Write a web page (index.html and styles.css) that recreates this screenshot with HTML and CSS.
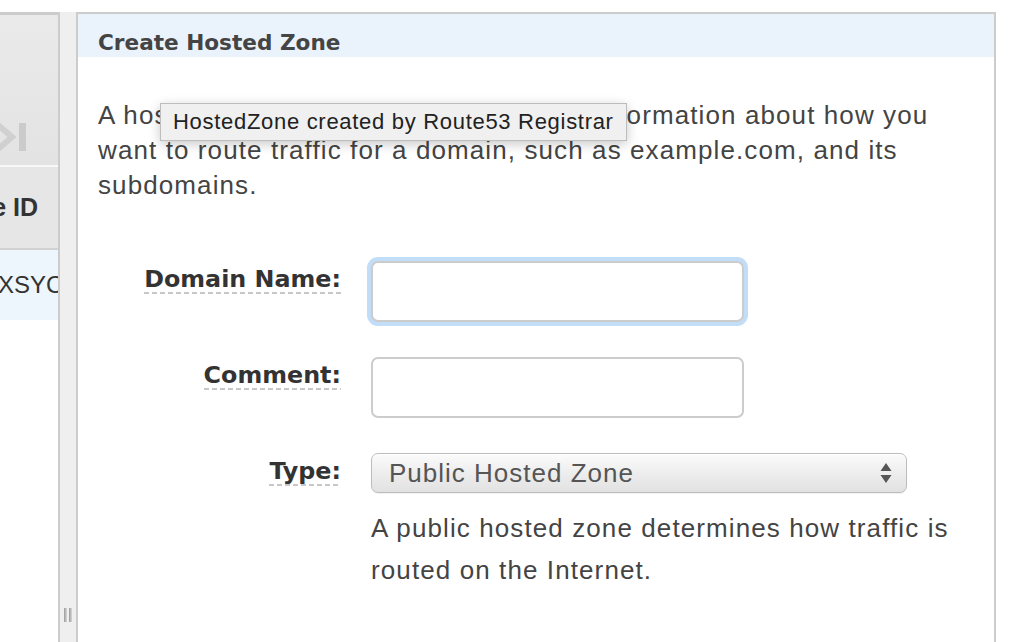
FILE: index.html
```html
<!DOCTYPE html>
<html>
<head>
<meta charset="utf-8">
<title>Create Hosted Zone</title>
<link rel="stylesheet" href="styles.css">
</head>
<body>
<div class="page">
  <div class="list-panel">
    <div class="toolbar">
      <svg class="last-icon" width="30" height="30" viewBox="0 0 30 30">
        <path d="M-3 2 L12 15 L-3 28" fill="none" stroke="#d0d0d0" stroke-width="6" stroke-linejoin="miter"/>
        <rect x="19" y="1" width="7" height="28" fill="#cbcbcb"/>
      </svg>
    </div>
    <div class="col-head"><span>Hosted Zone ID</span></div>
    <div class="row-selected"><span class="cell-id">XSYC4KQ2Z</span></div>
  </div>
  <div class="splitter">
    <div class="grip"><span></span><span></span></div>
  </div>
  <div class="dialog">
    <div class="dialog-head">Create Hosted Zone</div>
    <div class="dialog-body">
      <p class="intro">A hosted zone is a container that holds information about how you want to route traffic for a domain, such as example.com, and its subdomains.</p>
      <div class="form">
        <div class="label-cell"><span class="label">Domain Name:</span></div>
        <div class="field-cell"><div class="text-input focused"></div></div>

        <div class="label-cell"><span class="label">Comment:</span></div>
        <div class="field-cell"><div class="text-input"></div></div>

        <div class="label-cell"><span class="label">Type:</span></div>
        <div class="field-cell">
          <div class="select">
            <span class="select-value">Public Hosted Zone</span>
            <svg class="select-arrows" width="12" height="22" viewBox="0 0 12 22">
              <path d="M6 1 L11.5 9 L0.5 9 Z" fill="#555"/>
              <path d="M6 21 L11.5 13 L0.5 13 Z" fill="#555"/>
            </svg>
          </div>
          <p class="help">A public hosted zone determines how traffic is routed on the Internet.</p>
        </div>
      </div>
    </div>
    <div class="tooltip">HostedZone created by Route53 Registrar</div>
  </div>
</div>
</body>
</html>
```
FILE: styles.css
```css
html, body {
  margin: 0;
  padding: 0;
  background: #ffffff;
}
.page {
  display: flex;
  height: 630px;
  margin-top: 12px;
  overflow: hidden;
  font-family: "Liberation Sans", Arial, sans-serif;
}
.list-panel {
  width: 58px;
  flex: 0 0 58px;
  border-top: 3px solid #cccccc;
  border-right: 2px solid #cccccc;
  background: #ffffff;
  overflow: hidden;
  display: flex;
  flex-direction: column;
}
.toolbar {
  height: 152px;
  flex: 0 0 152px;
  background: linear-gradient(#eaeaea, #e3e3e3);
  border-bottom: 2px solid #f8f8f8;
  display: flex;
  align-items: flex-end;
  justify-content: flex-start;
  padding-bottom: 13px;
  box-sizing: border-box;
}
.last-icon {
  display: block;
}
.col-head {
  height: 81px;
  flex: 0 0 81px;
  background: #e6e6e6;
  border-bottom: 2px solid #d2d2d2;
  display: flex;
  align-items: center;
  justify-content: flex-end;
  padding-right: 20px;
  font-weight: bold;
  font-size: 25px;
  color: #333333;
  white-space: nowrap;
  overflow: hidden;
}
.row-selected {
  height: 70px;
  flex: 0 0 70px;
  background: #eef6fd;
  display: flex;
  align-items: center;
  white-space: nowrap;
  overflow: hidden;
  font-size: 24px;
  color: #333333;
}
.cell-id {
  margin-left: -2px;
}
.splitter {
  width: 16px;
  flex: 0 0 16px;
  background: #efefef;
  display: flex;
  flex-direction: column;
  justify-content: flex-end;
  align-items: center;
  padding-bottom: 20px;
  box-sizing: border-box;
}
.grip {
  display: flex;
  gap: 2px;
  height: 14px;
}
.grip span {
  width: 3px;
  height: 14px;
  background: linear-gradient(to right, #9a9a9a, #d8d8d8);
}
.dialog {
  position: relative;
  width: 916px;
  flex: 0 0 916px;
  border: 2px solid #cccccc;
  border-bottom: none;
  background: #ffffff;
}
.dialog-head {
  height: 43px;
  background: #eaf2fc;
  padding-left: 20px;
  padding-top: 14px;
  display: flex;
  align-items: center;
  font-family: "DejaVu Sans", Verdana, sans-serif;
  font-weight: bold;
  font-size: 21.6px;
  color: #444444;
  box-sizing: border-box;
}
.dialog-body {
  padding: 41px 36px 0 20px;
}
.intro {
  margin: 0;
  font-size: 26px;
  letter-spacing: 1.1px;
  line-height: 35px;
  color: #444444;
}
.form {
  display: grid;
  grid-template-columns: 243px 1fr;
  column-gap: 30px;
  row-gap: 35px;
  margin-top: 58px;
}
.label-cell {
  text-align: right;
}
.label {
  display: inline-block;
  font-family: "DejaVu Sans", Verdana, sans-serif;
  font-weight: bold;
  font-size: 23.8px;
  line-height: 26px;
  color: #333333;
  padding-top: 5px;
  padding-bottom: 2px;
  background-image: repeating-linear-gradient(to right, #c8c8c8 0 5px, transparent 5px 8px);
  background-size: 100% 2px;
  background-repeat: no-repeat;
  background-position: left bottom;
}
.text-input {
  width: 373px;
  height: 61px;
  box-sizing: border-box;
  border: 2px solid #cccccc;
  border-radius: 7px;
  background: #ffffff;
}
.text-input.focused {
  box-shadow: 0 0 0 4px #c2ddf8;
}
.select {
  width: 536px;
  height: 40px;
  box-sizing: border-box;
  border: 1px solid #bcbcbc;
  border-radius: 7px;
  background: linear-gradient(#fbfbfb, #ececec 55%, #e2e2e2);
  box-shadow: inset 0 1px 0 #ffffff, 0 1px 1px rgba(0,0,0,0.06);
  display: flex;
  align-items: center;
  justify-content: space-between;
  padding: 0 14px 0 17px;
}
.select-value {
  font-size: 26px;
  letter-spacing: 1px;
  color: #555555;
}
.help {
  margin: 14px 0 0 0;
  width: 620px;
  font-size: 26px;
  letter-spacing: 1.1px;
  line-height: 42px;
  color: #444444;
}
.tooltip {
  position: absolute;
  left: 82px;
  top: 89px;
  width: 467px;
  height: 38px;
  box-sizing: border-box;
  background: #f0f0f0;
  border: 1px solid #bdbdbd;
  box-shadow: 0 3px 12px rgba(0,0,0,0.22);
  padding-left: 12px;
  display: flex;
  align-items: center;
  font-size: 22px;
  letter-spacing: 0.7px;
  color: #222222;
  white-space: nowrap;
}
```
